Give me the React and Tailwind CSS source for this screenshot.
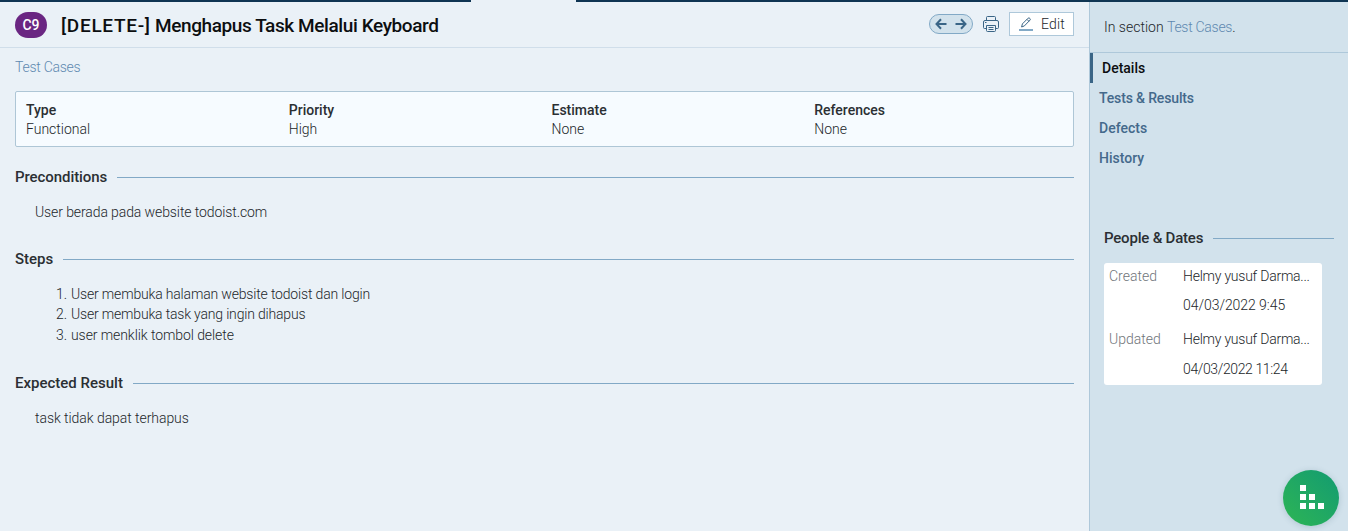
const fields = [
  ['Type', 'Functional'],
  ['Priority', 'High'],
  ['Estimate', 'None'],
  ['References', 'None'],
];

const steps = [
  ['User membuka halaman website todoist dan login', 'h-5', 'tracking-[-0.17px]'],
  ['User membuka task yang ingin dihapus', 'h-[21px]', 'tracking-[-0.18px]'],
  ['user menklik tombol delete', 'h-[20.5px]', 'tracking-[-0.08px]'],
];

function Heading({ children, className = '' }) {
  return (
    <div className={`flex h-5 items-center gap-[10px] ${className}`}>
      <h2 className="whitespace-nowrap text-[15px] leading-5 font-medium text-[#2b2f33]">{children}</h2>
      <div className="h-px flex-1 bg-[#82a9c6]" />
    </div>
  );
}

function Arrows() {
  return (
    <div className="mb-[2px] flex h-5 w-11 items-center justify-center gap-2 rounded-full border border-[#82a9c6] bg-[#d2e2ec]">
      <svg width="12" height="12" viewBox="0 0 12 12" fill="none" stroke="#3a6586" strokeWidth="2">
        <path d="M11.5 6H1.5M6 1.2L1.5 6L6 10.8" />
      </svg>
      <svg width="12" height="12" viewBox="0 0 12 12" fill="none" stroke="#3a6586" strokeWidth="2">
        <path d="M.5 6H10.5M6 1.2L10.5 6L6 10.8" />
      </svg>
    </div>
  );
}

function Printer() {
  return (
    <svg width="16" height="16" viewBox="0 0 16 16" fill="none" stroke="#3a6586" strokeWidth="1">
      <path d="M3.5 4.5V1.5Q3.5.5 4.5.5H11.5Q12.5.5 12.5 1.5V4.5M3.5 12.5H1.5Q.5 12.5.5 11.5V6Q.5 4.5 2 4.5H14Q15.5 4.5 15.5 6V11.5Q15.5 12.5 14.5 12.5H12.5M3.5 9.5H12.5V14.5Q12.5 15.5 11.5 15.5H4.5Q3.5 15.5 3.5 14.5ZM5.5 11.5H10.5M5.5 13.5H10.5M2 6.5H3.5" />
    </svg>
  );
}

function Pencil() {
  return (
    <svg width="14" height="14" viewBox="0 0 14 14" fill="none" stroke="#3a6586">
      <path d="M2.6 10L3.4 6.9L9.1 1.2Q9.9.5 10.7 1.3L11 1.6Q11.7 2.4 11 3.1L5.4 8.9ZM8 2.4L9.9 4.3" strokeWidth="1" />
      <path d="M0 13H14" stroke="#82a9c6" strokeWidth="2" />
    </svg>
  );
}

function Person({ label, date, className = '', dateClass }) {
  return (
    <div className={`grid grid-cols-[74px_1fr] ${className}`}>
      <span className="text-[#70757a]">{label}</span>
      <span className="whitespace-nowrap tracking-[-0.23px]">Helmy yusuf Darma...</span>
      <span className={`col-start-2 ${dateClass}`}>{date}</span>
    </div>
  );
}

export default function App() {
  return (
    <div className="flex h-[531px] w-[1348px] flex-col overflow-hidden bg-[#eaf1f7] font-['Roboto',sans-serif] text-[14px] leading-5 font-light text-[#22262a]">
      <div className="flex h-[2px] shrink-0 justify-between">
        <div className="w-[471px] bg-[#0f3553]" />
        <div className="w-[772px] bg-[#0f3553]" />
      </div>
      <div className="flex min-h-0 flex-1">
        <main className="w-[1089px]">
          <header className="flex h-[46px] items-center border-b border-[#d0deea] px-[15px]">
            <span className="flex h-[26px] w-8 items-center justify-center rounded-full bg-[#6a2682] text-[14px] font-medium text-white">C9</span>
            <h1 className="mt-[2px] ml-[14px] flex-1 text-[19px] font-medium text-[#0c0e10]">
              <span className="tracking-[0.7px]">[DELETE-]</span>
              <span className="tracking-[-0.41px]"> Menghapus Task Melalui Keyboard</span>
            </h1>
            <Arrows />
            <div className="mb-[2px] ml-[10px]"><Printer /></div>
            <button className="mb-px ml-[10px] flex h-6 w-[65px] items-center gap-2 border border-[#aec8da] bg-white pl-[9px] text-[14px] font-light">
              <Pencil />
              <span className="tracking-[0.2px]">Edit</span>
            </button>
          </header>
          <div className="px-[15px]">
            <div className="mt-[9px] tracking-[-0.26px] text-[#6089b0]">Test Cases</div>
            <section className="mt-[14px] grid h-14 grid-cols-[262.75px_262.75px_262.75px_1fr] rounded-[2px] border border-[#aec6d6] bg-[#f6fbff] pt-2 pl-[10px]">
              {fields.map(([name, value]) => (
                <div key={name}>
                  <div className="font-medium text-[#2b2f33]">{name}</div>
                  <div className="-mt-px">{value}</div>
                </div>
              ))}
            </section>
            <Heading className="mt-5 tracking-[-0.07px]">Preconditions</Heading>
            <p className="mt-[15px] ml-5 tracking-[-0.1px]">User berada pada website todoist.com</p>
            <Heading className="mt-[27px]">Steps</Heading>
            <ol className="mt-[15px] ml-[41px]">
              {steps.map(([text, height, tracking], i) => (
                <li key={text} className={`flex ${height}`}>
                  <span className="w-[15px]">{i + 1}.</span>
                  <span className={tracking}>{text}</span>
                </li>
              ))}
            </ol>
            <Heading className="mt-[27.5px]">Expected Result</Heading>
            <p className="mt-[15px] ml-5 tracking-[-0.06px]">task tidak dapat terhapus</p>
          </div>
        </main>
        <aside className="relative flex-1 border-l border-[#aec8da] bg-[#d2e2ec]">
          <div className="h-[51px] border-b border-[#aec8da] pt-[15px] pl-[14px]">
            In section <span className="tracking-[-0.28px] text-[#6089b0]">Test Cases</span>.
          </div>
          <nav className="text-[14px] leading-[30px] font-medium text-[#44698b]">
            <div className="h-[30px] border-l-[3px] border-[#3a6586] pl-[9px] text-[#0c0e10]">Details</div>
            <div className="pl-[9px] tracking-[-0.15px]">Tests &amp; Results</div>
            <div className="pl-[9px]">Defects</div>
            <div className="pl-[9px]">History</div>
          </nav>
          <Heading className="mt-[55px] mr-[14px] ml-[14px] tracking-[-0.2px]">People &amp; Dates</Heading>
          <div className="mt-[15px] ml-[14px] h-[122px] w-[218px] rounded-[3px] bg-white pt-[3px] pl-[5px]">
            <Person label="Created" date="04/03/2022 9:45" dateClass="mt-[9px] tracking-[-0.05px]" />
            <Person label="Updated" date="04/03/2022 11:24" className="mt-[14px]" dateClass="mt-[10px] tracking-[-0.38px]" />
          </div>
          <button aria-label="Open panel" className="absolute top-[468px] left-[193px] flex size-14 items-center justify-center rounded-full bg-linear-to-tr from-[#2db553] to-[#129b70] shadow-[0_1px_6px_rgba(40,80,100,0.2)]">
            <svg width="24" height="24" viewBox="0 0 24 24" fill="#fff" className="mb-[2px] ml-[2px]">
              <path d="M0 0h6v6H0zM0 9h6v6H0zM9 9h6v6H9zM0 18h6v6H0zM9 18h6v6H9zM18 18h6v6h-6z" />
            </svg>
          </button>
        </aside>
      </div>
    </div>
  );
}
